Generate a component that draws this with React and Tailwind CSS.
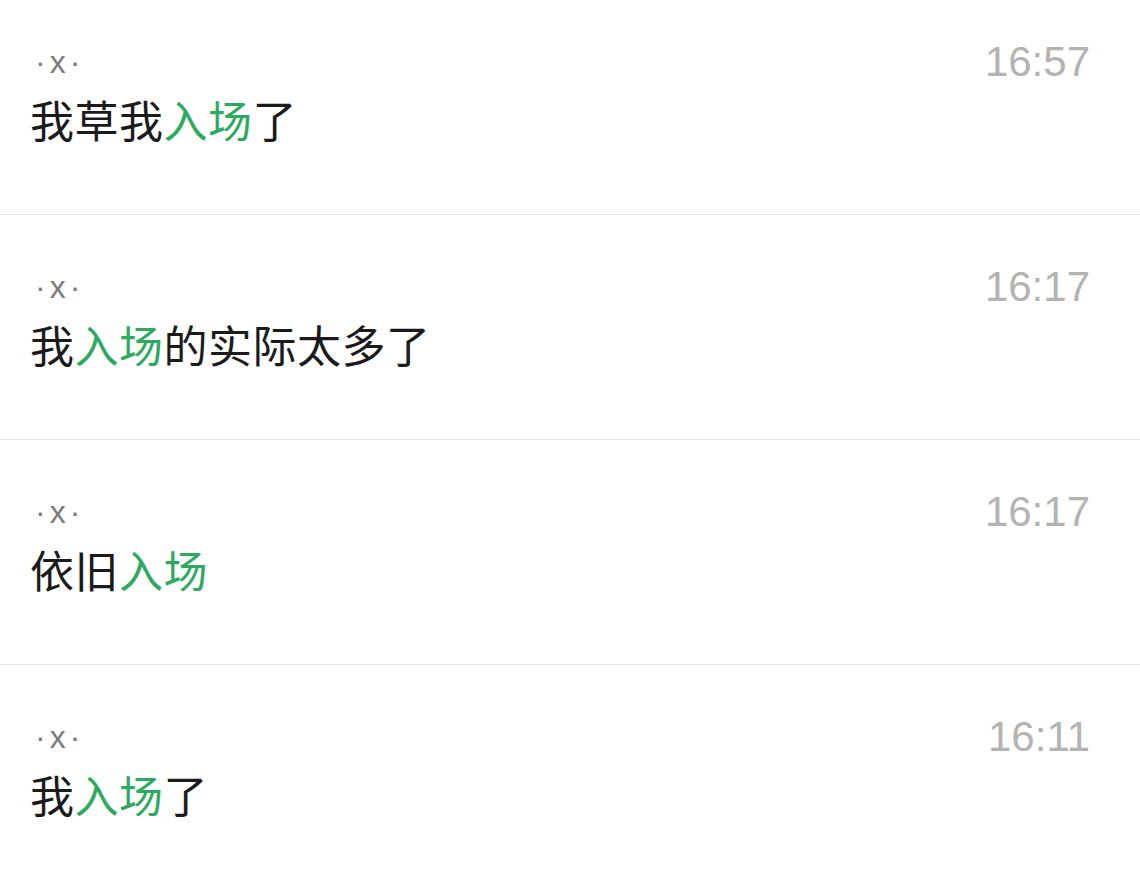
const messages = [
  { name: "·x·", time: "16:57", parts: ["我草我", "入场", "了"] },
  { name: "·x·", time: "16:17", parts: ["我", "入场", "的实际太多了"] },
  { name: "·x·", time: "16:17", parts: ["依旧", "入场", ""] },
  { name: "·x·", time: "16:11", parts: ["我", "入场", "了"] },
];

const font = { fontFamily: '"Liberation Sans", "Noto Sans CJK SC", sans-serif' };

function Row({ msg, first }) {
  const [before, hit, after] = msg.parts;
  return (
    <div
      className={`flex items-start justify-between pl-[30px] pr-[50px] border-b border-[#e6e6e6] ${
        first ? "h-[215px] pt-[42px]" : "h-[225px] pt-[52px]"
      }`}
    >
      <div className="flex flex-col">
        <div className="h-[40px] leading-[40px] text-[32px] tracking-[4px] text-[#7b7b7b] pl-[5px]">{msg.name}</div>
        <div
          className="mt-[7px] h-[60px] leading-[60px] text-[44px] tracking-[0.5px] text-[#1b1b1b]"
          style={{ fontFamily: '"Noto Sans CJK SC", sans-serif' }}
        >
          {before}
          <span className="text-[#2fa862]">{hit}</span>
          {after}
        </div>
      </div>
      <div className="h-[40px] leading-[40px] text-[42px] text-[#b3b3b3]">{msg.time}</div>
    </div>
  );
}

export default function App() {
  return (
    <div className="w-[1140px] h-[883px] overflow-hidden bg-white" style={font}>
      {messages.map((m, i) => (
        <Row key={i} msg={m} first={i === 0} />
      ))}
    </div>
  );
}
